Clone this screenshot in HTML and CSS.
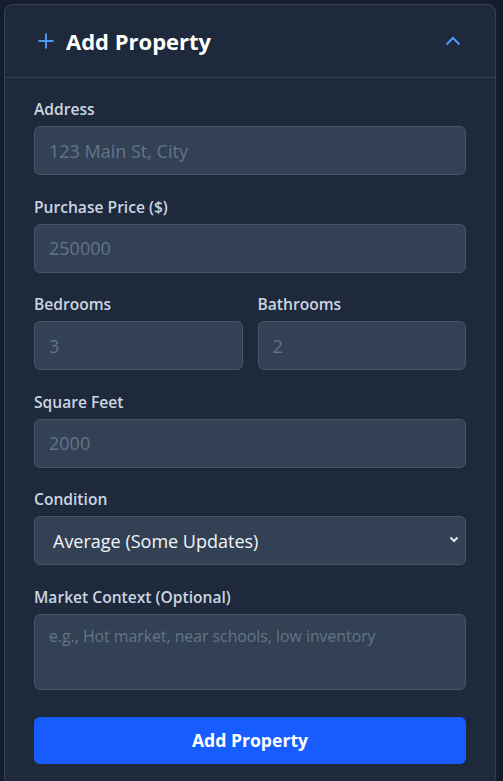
FILE: index.html
```html
<!DOCTYPE html>
<html lang="en">
<head>
<meta charset="utf-8">
<title>Add Property</title>
<link rel="stylesheet" href="styles.css">
</head>
<body>
<section class="card">
  <header class="card-header">
    <h2 class="title">
      <svg class="plus" width="18" height="18" viewBox="0 0 18 18" aria-hidden="true"><path d="M9 1.5v15M1.5 9h15" stroke="currentColor" stroke-width="2" fill="none"/></svg>
      <span>Add Property</span>
    </h2>
    <svg class="chev" width="16" height="10" viewBox="0 0 16 10" aria-hidden="true"><path d="M1.5 8.5L8 2l6.5 6.5" stroke="currentColor" stroke-width="2" fill="none"/></svg>
  </header>
  <form class="card-body">
    <div class="field">
      <label class="label">Address</label>
      <input class="input" type="text" placeholder="123 Main St, City">
    </div>
    <div class="field">
      <label class="label">Purchase Price ($)</label>
      <input class="input" type="text" placeholder="250000">
    </div>
    <div class="row">
      <div class="field">
        <label class="label">Bedrooms</label>
        <input class="input" type="text" placeholder="3">
      </div>
      <div class="field">
        <label class="label">Bathrooms</label>
        <input class="input" type="text" placeholder="2">
      </div>
    </div>
    <div class="field">
      <label class="label">Square Feet</label>
      <input class="input" type="text" placeholder="2000">
    </div>
    <div class="field">
      <label class="label">Condition</label>
      <div class="select-wrap">
        <select class="input select">
          <option>Average (Some Updates)</option>
        </select>
        <svg class="sel-chev" width="10" height="7" viewBox="0 0 10 7" aria-hidden="true"><path d="M1.5 1.5L5 5l3.5-3.5" stroke="currentColor" stroke-width="2" fill="none"/></svg>
      </div>
    </div>
    <div class="field">
      <label class="label">Market Context (Optional)</label>
      <textarea class="input textarea" placeholder="e.g., Hot market, near schools, low inventory"></textarea>
    </div>
    <button class="btn" type="button">Add Property</button>
  </form>
</section>
</body>
</html>
```
FILE: styles.css
```css
* { box-sizing: border-box; }
html, body { margin: 0; padding: 0; }
body {
  background: #141c2e;
  font-family: "Open Sans", "Noto Sans", sans-serif;
  padding: 4px 7px 0 4px;
  height: 781px;
  overflow: hidden;
}
.card {
  background: #1e293b;
  border: 1px solid #334155;
  border-radius: 8px;
  width: 492px;
}
.card-header {
  height: 73px;
  border-bottom: 1px solid #334155;
  display: flex;
  align-items: center;
  justify-content: space-between;
  padding: 0 34px 0 32px;
}
.title {
  margin: 0;
  display: flex;
  align-items: center;
  gap: 11px;
  color: #ffffff;
  font-size: 22px;
  font-weight: 700;
}
.plus { color: #4a9af5; }
.chev { color: #4a9af5; }
.card-body {
  padding: 21px 29px 20px;
  display: flex;
  flex-direction: column;
  gap: 21.6px;
}
.field {
  display: flex;
  flex-direction: column;
  min-width: 0;
}
.row {
  display: grid;
  grid-template-columns: 1fr 1fr;
  gap: 15px;
}
.label {
  color: #cbd5e1;
  font-size: 15.6px;
  font-weight: 600;
  line-height: 20px;
  margin-bottom: 7px;
}
.input {
  width: 100%;
  height: 49px;
  background: #334155;
  border: 1px solid #475569;
  border-radius: 6px;
  color: #f1f5f9;
  font-family: inherit;
  font-size: 18px;
  padding: 0 14px;
  outline: none;
}
.input::placeholder { color: #64748b; }
.select-wrap { position: relative; }
.select {
  appearance: none;
  -webkit-appearance: none;
  padding-left: 18px;
  color: #f1f5f9;
}
.sel-chev {
  position: absolute;
  right: 7px;
  top: 20px;
  color: #e2e8f0;
  pointer-events: none;
}
.textarea {
  height: 76px;
  resize: none;
  padding: 10px 14px;
  font-size: 15.8px;
  line-height: 22px;
}
.btn {
  margin-top: 5px;
  height: 47px;
  background: #175cff;
  color: #ffffff;
  border: none;
  border-radius: 6px;
  font-family: inherit;
  font-size: 17.6px;
  font-weight: 700;
}
```
